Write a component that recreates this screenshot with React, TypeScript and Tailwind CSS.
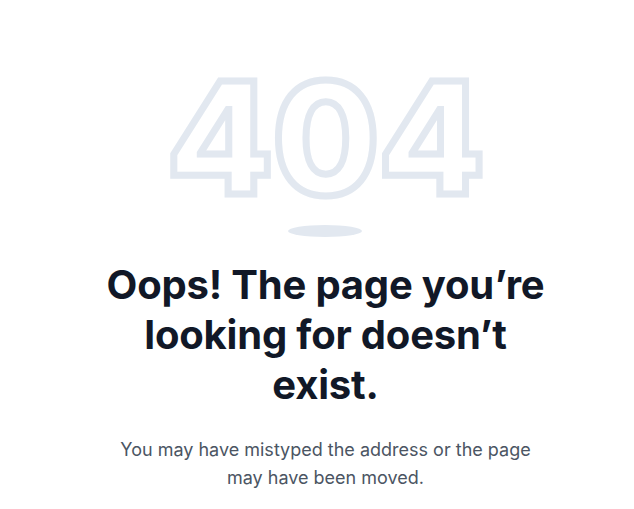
export default function App() {
  return (
    <main className="min-h-[509px] w-full bg-white flex flex-col items-center pt-[60px] pl-[17px] font-['Inter',sans-serif]">
      {/* Big outlined 404 */}
      <div className="flex flex-col items-center">
        <span className="text-[155px] leading-none font-extrabold text-transparent tracking-[-1px] [-webkit-text-stroke:7px_#e2e8f0]">
          404
        </span>
        <div className="mt-[10px] w-[74px] h-[12px] rounded-[50%] bg-[#e2e8f0]"></div>
      </div>

      <h1 className="mt-[23px] max-w-[460px] text-center text-[40px] leading-[50px] font-bold text-[#111827] tracking-[-0.2px]">
        Oops! The page you’re looking for doesn’t exist.
      </h1>

      <p className="mt-[26px] max-w-[430px] text-center text-[18px] leading-[28px] text-[#4b5563]">
        You may have mistyped the address or the page may have been moved.
      </p>
    </main>
  );
}
